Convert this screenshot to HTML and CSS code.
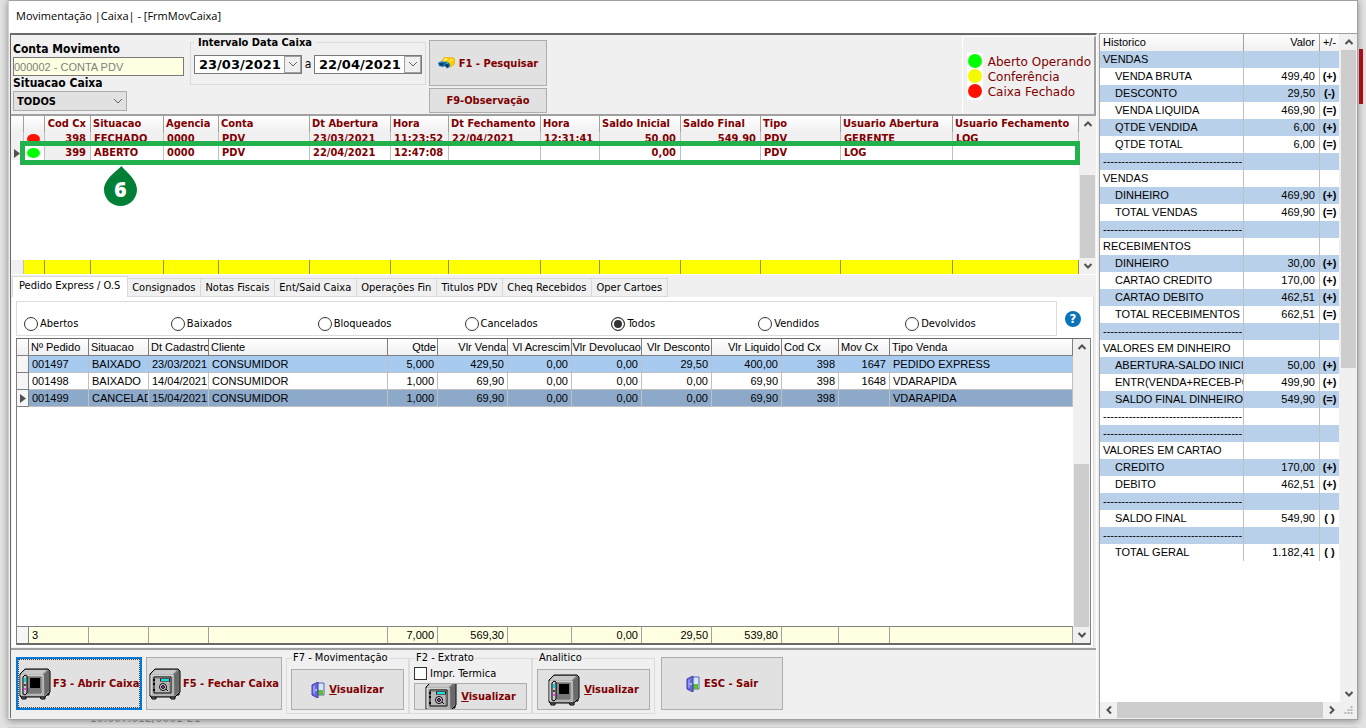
FILE: index.html
```html
<!DOCTYPE html>
<html lang="pt-br">
<head>
  <meta charset="UTF-8">
  <title>Movimentação |Caixa|</title>
  <link rel="stylesheet" href="styles.css">
</head>
<body>
  <svg class="defs" aria-hidden="true">
    <symbol id="seta-cima" viewBox="0 0 10 10"><path d="M1.5 7 5 3.5 8.5 7" fill="none" stroke="#505050" stroke-width="2"/></symbol>
    <symbol id="seta-baixo" viewBox="0 0 10 10"><path d="M1.5 3 5 6.5 8.5 3" fill="none" stroke="#505050" stroke-width="2"/></symbol>
    <symbol id="seta-esq" viewBox="0 0 10 10"><path d="M7 1.5 3.5 5 7 8.5" fill="none" stroke="#505050" stroke-width="2"/></symbol>
    <symbol id="seta-dir" viewBox="0 0 10 10"><path d="M3 1.5 6.5 5 3 8.5" fill="none" stroke="#505050" stroke-width="2"/></symbol>
    <symbol id="combo" viewBox="0 0 10 10"><path d="M1 3 5 7 9 3" fill="none" stroke="#606060" stroke-width="1"/></symbol>
    <symbol id="cofre-base" viewBox="0 0 32 32">
      <path d="M2 28h5v3H3zM21 28h5v3h-4zM27 24h3v3h-2z" fill="#808080" stroke="#000"/>
      <path d="M1 6 6 1h23l2 2v21l-5 5H2l-1-1z" fill="#808080" stroke="#000"/>
      <path d="M2 6 6 2h22l-4 4z" fill="#c8c8c8"/>
      <path d="M25 7l5-5v21l-4 4z" fill="#6a6a6a"/>
      <path d="M2 7h23v21H2z" fill="#b4b4b4"/>
      <path d="M2 27V7h22" fill="none" stroke="#eee"/>
    </symbol>
    <symbol id="cofre-aberto" viewBox="0 0 32 32">
      <use href="#cofre-base"/>
      <path d="M8 9h14v16H8z" fill="#888" stroke="#666"/>
      <path d="M11 10h10v10H11z" fill="#000"/>
      <path d="M9 20h12v4H9z" fill="#777"/>
      <path d="M4 9 6 7l2 1v17l-2 2-2-1z" fill="#c8c8c8" stroke="#000"/>
      <path d="M5 10h2v4H5z" fill="#00e0e0"/>
      <path d="M5 20h2v2H5z" fill="#ff40ff"/>
      <path d="M5 16h2v2H5z" fill="#444"/>
    </symbol>
    <symbol id="cofre-fechado" viewBox="0 0 32 32">
      <use href="#cofre-base"/>
      <path d="M5 9h17v16H5z" fill="#b8b8b8" stroke="#000"/>
      <path d="M6 10h15v14" fill="none" stroke="#777"/>
      <path d="M4 12h2M4 16h2M4 22h2" stroke="#000" stroke-width="2"/>
      <path d="M11 12h10" stroke="#000" stroke-width="3"/>
      <path d="M12 12h8" stroke="#00e8e8" stroke-width="2"/>
      <circle cx="14" cy="19" r="3.500" fill="#ddd" stroke="#000"/>
      <circle cx="14" cy="19" r="1.500" fill="#c040c0" stroke="#000"/>
      <path d="M17 21l2 2" stroke="#000" stroke-width="1"/>
    </symbol>
    <symbol id="porta" viewBox="0 0 14 16">
      <path d="M6 1h7v12H6z" fill="#cde9fa" stroke="#5b62b8"/>
      <path d="M7 8h5v5H7z" fill="#58c322"/>
      <path d="M1 3 7 0v16l-6-3z" fill="#6868dc" stroke="#3c3ca8"/>
      <path d="M2 4l2-1v9l-2-1z" fill="#9292f0"/>
      <path d="M5 7v2" stroke="#fff"/>
    </symbol>
    <symbol id="binoculo" viewBox="0 0 17 12">
      <path d="M4 3 7 0h3l2 1 3-.5L17 3l-.5 4-4 3-5-2z" fill="#fc0" stroke="#dc9800" stroke-width=".6"/>
      <path d="M5 3l3-2 2 1-2 2zM11 4l3-2 1 1-3 2z" fill="#fff07c"/>
      <path d="M0 6l3-2 3 1 3-.5 3 2.500-.5 3-2.500 1.500L7 9 5 10 1 9z" fill="#126ba5"/>
      <circle cx="3.500" cy="7" r="1.500" fill="#0a3560"/><circle cx="9" cy="8.500" r="1.600" fill="#0a3560"/>
      <path d="M2 5h2M8 6h2" stroke="#5cc6f4"/>
    </symbol>
  </svg>

  <div class="fundo">
    <div class="janela">
      <header class="titulo">Movimentação |Caixa| - [FrmMovCaixa]</header>

      <div class="corpo">
        <main class="principal">

          <section class="filtros">
            <div class="conta">
              <label for="conta">Conta Movimento</label>
              <input type="text" id="conta" value="000002 - CONTA PDV" disabled>
              <label for="situacao">Situacao Caixa</label>
              <div class="combo">
                <select id="situacao"><option>TODOS</option></select>
                <svg><use href="#combo"/></svg>
              </div>
            </div>
            <fieldset class="intervalo">
              <legend>Intervalo Data Caixa</legend>
              <div class="data">
                <input type="text" value="23/03/2021" aria-label="Data inicial">
                <button aria-label="Abrir calendário"><svg><use href="#combo"/></svg></button>
              </div>
              <span>a</span>
              <div class="data">
                <input type="text" value="22/04/2021" aria-label="Data final">
                <button aria-label="Abrir calendário"><svg><use href="#combo"/></svg></button>
              </div>
            </fieldset>
            <div class="acoes">
              <button class="botao pesquisar"><svg class="ico-bin"><use href="#binoculo"/></svg>F1 - Pesquisar</button>
              <button class="botao">F9-Observação</button>
            </div>
            <div class="legenda">
              <div class="bolas"><i class="verde"></i><i class="amarelo"></i><i class="vermelho"></i></div>
              <div class="textos"><span>Aberto Operando</span><span>Conferência</span><span>Caixa Fechado</span></div>
            </div>
          </section>

          <section class="caixas">
            <div class="area">
              <table class="tab-caixas">
                <colgroup>
                  <col class="w13"><col class="w21"><col class="w46"><col class="w73"><col class="w55"><col class="w91"><col class="w81"><col class="w58"><col class="w92"><col class="w59"><col class="w81"><col class="w80"><col class="w80"><col class="w112"><col>
                </colgroup>
                <thead>
                  <tr><th></th><th></th><th class="num">Cod Cx</th><th>Situacao</th><th>Agencia</th><th>Conta</th><th>Dt Abertura</th><th>Hora</th><th>Dt Fechamento</th><th>Hora</th><th>Saldo Inicial</th><th>Saldo Final</th><th>Tipo</th><th>Usuario Abertura</th><th>Usuario Fechamento</th></tr>
                </thead>
                <tbody>
                  <tr class="cinza"><td></td><td class="st"><i class="vermelho"></i></td><td class="num">398</td><td>FECHADO</td><td>0000</td><td>PDV</td><td>23/03/2021</td><td>11:23:52</td><td>22/04/2021</td><td>12:31:41</td><td class="num">50,00</td><td class="num">549,90</td><td>PDV</td><td>GERENTE</td><td>LOG</td></tr>
                  <tr><td class="marca"><svg viewBox="0 0 6 9"><path d="M0 0 6 4.500 0 9z"/></svg></td><td class="st"><i class="verde"></i></td><td class="num fixo">399</td><td>ABERTO</td><td>0000</td><td>PDV</td><td>22/04/2021</td><td>12:47:08</td><td></td><td></td><td class="num">0,00</td><td></td><td>PDV</td><td>LOG</td><td></td></tr>
                </tbody>
              </table>
              <table class="tab-caixas rodape">
                <colgroup>
                  <col class="w13"><col class="w21"><col class="w46"><col class="w73"><col class="w55"><col class="w91"><col class="w81"><col class="w58"><col class="w92"><col class="w59"><col class="w81"><col class="w80"><col class="w80"><col class="w112"><col>
                </colgroup>
                <tbody><tr><td></td><td></td><td></td><td></td><td></td><td></td><td></td><td></td><td></td><td></td><td></td><td></td><td></td><td></td><td></td></tr></tbody>
              </table>
              <div class="destaque"></div>
              <div class="gota">
                <svg viewBox="0 0 33 40"><path d="M17.500 0C20 4 33 13 33 23.500a16.500 16.500 0 0 1-33 0C0 13 14 4 17.500 0z" fill="#008037"/></svg>
                <span>6</span>
              </div>
            </div>
            <div class="rolagem">
              <button aria-label="Subir"><svg><use href="#seta-cima"/></svg></button>
              <div class="trilho"><div class="polegar fim p66"></div></div>
              <button aria-label="Descer"><svg><use href="#seta-baixo"/></svg></button>
            </div>
          </section>

          <section class="pedidos">
            <nav class="abas">
              <button class="ativa">Pedido Express / O.S</button>
              <button>Consignados</button>
              <button>Notas Fiscais</button>
              <button>Ent/Said Caixa</button>
              <button>Operações Fin</button>
              <button>Titulos PDV</button>
              <button>Cheq Recebidos</button>
              <button>Oper Cartoes</button>
            </nav>
            <div class="pagina">
              <div class="topo">
                <div class="opcoes">
                  <label><input type="radio" name="filtro">Abertos</label>
                  <label><input type="radio" name="filtro">Baixados</label>
                  <label><input type="radio" name="filtro">Bloqueados</label>
                  <label><input type="radio" name="filtro">Cancelados</label>
                  <label><input type="radio" name="filtro" checked>Todos</label>
                  <label><input type="radio" name="filtro">Vendidos</label>
                  <label><input type="radio" name="filtro">Devolvidos</label>
                </div>
                <button class="ajuda" aria-label="Ajuda">?</button>
              </div>
              <div class="grade">
                <div class="area">
                  <table class="tab-pedidos">
                    <colgroup>
                      <col class="w12"><col class="w60"><col class="w60"><col class="w60"><col class="w179"><col class="w50"><col class="w70"><col class="w64"><col class="w70"><col class="w70"><col class="w70"><col class="w57"><col class="w51"><col>
                    </colgroup>
                    <thead>
                      <tr><th></th><th>Nº Pedido</th><th>Situacao</th><th>Dt Cadastro</th><th>Cliente</th><th class="num">Qtde</th><th class="num">Vlr Venda</th><th class="num">Vl Acrescim</th><th class="num corta">Vlr Devolucao</th><th class="num">Vlr Desconto</th><th class="num">Vlr Liquido</th><th>Cod Cx</th><th>Mov Cx</th><th>Tipo Venda</th></tr>
                    </thead>
                    <tbody>
                      <tr class="azul"><td></td><td>001497</td><td>BAIXADO</td><td>23/03/2021</td><td>CONSUMIDOR</td><td class="num">5,000</td><td class="num">429,50</td><td class="num">0,00</td><td class="num">0,00</td><td class="num">29,50</td><td class="num">400,00</td><td class="num">398</td><td class="num">1647</td><td>PEDIDO EXPRESS</td></tr>
                      <tr><td></td><td>001498</td><td>BAIXADO</td><td>14/04/2021</td><td>CONSUMIDOR</td><td class="num">1,000</td><td class="num">69,90</td><td class="num">0,00</td><td class="num">0,00</td><td class="num">0,00</td><td class="num">69,90</td><td class="num">398</td><td class="num">1648</td><td>VDARAPIDA</td></tr>
                      <tr class="atual"><td class="marca"><svg viewBox="0 0 6 9"><path d="M0 0 6 4.500 0 9z"/></svg></td><td>001499</td><td>CANCELAD</td><td>15/04/2021</td><td>CONSUMIDOR</td><td class="num">1,000</td><td class="num">69,90</td><td class="num">0,00</td><td class="num">0,00</td><td class="num">0,00</td><td class="num">69,90</td><td class="num">398</td><td></td><td>VDARAPIDA</td></tr>
                    </tbody>
                  </table>
                  <table class="tab-pedidos totais">
                    <colgroup>
                      <col class="w12"><col class="w60"><col class="w60"><col class="w60"><col class="w179"><col class="w50"><col class="w70"><col class="w64"><col class="w70"><col class="w70"><col class="w70"><col class="w57"><col class="w51"><col>
                    </colgroup>
                    <tbody><tr><td></td><td>3</td><td></td><td></td><td></td><td class="num">7,000</td><td class="num">569,30</td><td></td><td class="num">0,00</td><td class="num">29,50</td><td class="num">539,80</td><td></td><td></td><td></td></tr></tbody>
                  </table>
                </div>
                <div class="rolagem">
                  <button aria-label="Subir"><svg><use href="#seta-cima"/></svg></button>
                  <div class="trilho"><div class="polegar fim p60"></div></div>
                  <button aria-label="Descer"><svg><use href="#seta-baixo"/></svg></button>
                </div>
              </div>
            </div>
          </section>

          <footer class="comandos">
            <button class="botao cofre foco"><svg class="ico-cofre"><use href="#cofre-aberto"/></svg>F3 - Abrir Caixa</button>
            <button class="botao cofre fechar"><svg class="ico-cofre"><use href="#cofre-fechado"/></svg>F5 - Fechar Caixa</button>
            <fieldset class="grupo">
              <legend>F7 - Movimentação</legend>
              <button class="botao"><svg class="ico-porta"><use href="#porta"/></svg><span><u>V</u>isualizar</span></button>
            </fieldset>
            <fieldset class="grupo">
              <legend>F2 - Extrato</legend>
              <label><input type="checkbox">Impr. Termica</label>
              <button class="botao"><svg class="ico-cofre"><use href="#cofre-fechado"/></svg><span><u>V</u>isualizar</span></button>
            </fieldset>
            <fieldset class="grupo">
              <legend>Analitico</legend>
              <button class="botao"><svg class="ico-cofre"><use href="#cofre-aberto"/></svg><span><u>V</u>isualizar</span></button>
            </fieldset>
            <button class="botao sair"><svg class="ico-porta"><use href="#porta"/></svg>ESC - Sair</button>
          </footer>
        </main>

        <aside class="lateral">
          <div class="linha">
            <div class="lista">
              <table class="historico">
                <colgroup><col><col class="w76"><col class="w20"></colgroup>
                <thead><tr><th>Historico</th><th class="num">Valor</th><th class="sinal">+/-</th></tr></thead>
                <tbody>
                  <tr><td>VENDAS</td><td></td><td></td></tr>
                  <tr><td class="sub">VENDA BRUTA</td><td>499,40</td><td>(+)</td></tr>
                  <tr><td class="sub">DESCONTO</td><td>29,50</td><td>(-)</td></tr>
                  <tr><td class="sub">VENDA LIQUIDA</td><td>469,90</td><td>(=)</td></tr>
                  <tr><td class="sub">QTDE VENDIDA</td><td>6,00</td><td>(+)</td></tr>
                  <tr><td class="sub">QTDE TOTAL</td><td>6,00</td><td>(=)</td></tr>
                  <tr><td>--------------------------------------</td><td></td><td></td></tr>
                  <tr><td>VENDAS</td><td></td><td></td></tr>
                  <tr><td class="sub">DINHEIRO</td><td>469,90</td><td>(+)</td></tr>
                  <tr><td class="sub">TOTAL VENDAS</td><td>469,90</td><td>(=)</td></tr>
                  <tr><td>--------------------------------------</td><td></td><td></td></tr>
                  <tr><td>RECEBIMENTOS</td><td></td><td></td></tr>
                  <tr><td class="sub">DINHEIRO</td><td>30,00</td><td>(+)</td></tr>
                  <tr><td class="sub">CARTAO CREDITO</td><td>170,00</td><td>(+)</td></tr>
                  <tr><td class="sub">CARTAO DEBITO</td><td>462,51</td><td>(+)</td></tr>
                  <tr><td class="sub">TOTAL RECEBIMENTOS</td><td>662,51</td><td>(=)</td></tr>
                  <tr><td>--------------------------------------</td><td></td><td></td></tr>
                  <tr><td>VALORES EM DINHEIRO</td><td></td><td></td></tr>
                  <tr><td class="sub">ABERTURA-SALDO INICIA</td><td>50,00</td><td>(+)</td></tr>
                  <tr><td class="sub">ENTR(VENDA+RECEB-PGT</td><td>499,90</td><td>(+)</td></tr>
                  <tr><td class="sub">SALDO FINAL DINHEIRO</td><td>549,90</td><td>(=)</td></tr>
                  <tr><td>--------------------------------------</td><td></td><td></td></tr>
                  <tr><td>--------------------------------------</td><td></td><td></td></tr>
                  <tr><td>VALORES EM CARTAO</td><td></td><td></td></tr>
                  <tr><td class="sub">CREDITO</td><td>170,00</td><td>(+)</td></tr>
                  <tr><td class="sub">DEBITO</td><td>462,51</td><td>(+)</td></tr>
                  <tr><td>--------------------------------------</td><td></td><td></td></tr>
                  <tr><td class="sub">SALDO FINAL</td><td>549,90</td><td>( )</td></tr>
                  <tr><td>--------------------------------------</td><td></td><td></td></tr>
                  <tr><td class="sub">TOTAL GERAL</td><td>1.182,41</td><td>( )</td></tr>
                </tbody>
              </table>
            </div>
            <div class="rolagem">
              <button aria-label="Subir"><svg><use href="#seta-cima"/></svg></button>
              <div class="trilho"><div class="polegar p50"></div></div>
              <button aria-label="Descer"><svg><use href="#seta-baixo"/></svg></button>
            </div>
          </div>
          <div class="rolagem-h">
            <button aria-label="Esquerda"><svg><use href="#seta-esq"/></svg></button>
            <div class="polegar"></div>
            <button aria-label="Direita"><svg><use href="#seta-dir"/></svg></button>
            <svg class="alca" viewBox="0 0 16 16"><path d="M10 4h2v2h-2zM7 7h2v2H7zM10 7h2v2h-2zM4 10h2v2H4zM7 10h2v2H7zM10 10h2v2h-2z" fill="#b8b8b8"/></svg>
          </div>
        </aside>
      </div>
    </div>
    <div class="tras"></div>
    <div class="atras-texto"><span>10.007.012/0001-21</span></div>
  </div>
</body>
</html>
```
FILE: styles.css
```css
* {
  box-sizing: border-box;
}

body {
  margin: 0;
  font-family: "DejaVu Sans Condensed", "DejaVu Sans", sans-serif;
  font-size: 11px;
  color: #000;
  overflow: hidden;
}

button, input, select {
  font: inherit;
  color: inherit;
  margin: 0;
  padding: 0;
  border-radius: 0;
}

svg {
  display: block;
}

i {
  display: block;
}

.defs {
  display: none;
}

/* fundo e janela */
.fundo {
  position: relative;
  display: flex;
  flex-direction: column;
  height: 100vh;
  padding: 0 8px;
  background: #e2e2e2;
}

.janela {
  flex: 1;
  min-height: 0;
  display: flex;
  flex-direction: column;
  background: #f0f0f0;
  border: 1px solid #a0a0a0;
  border-left-color: #d0d0d0;
  box-shadow: 0 1px 7px rgba(0,0,0,0.4);
  z-index: 1;
}

.titulo {
  height: 32px;
  flex: none;
  padding: 0 7px;
  line-height: 30px;
  background: #fff;
  font-family: "Open Sans", sans-serif;
  font-size: 11px;
}

.corpo {
  flex: 1;
  min-height: 0;
  display: flex;
  gap: 2px;
  padding: 0 0 1px 1px;
}

.principal {
  flex: 1;
  min-width: 0;
  display: flex;
  flex-direction: column;
  border-left: 1px solid #696969;
  border-top: 2px solid #696969;
  border-right: 1px solid #fff;
}

.atras-texto {
  height: 8px;
  flex: none;
  padding-left: 82px;
  border-bottom: 1px solid #d0d0d0;
  z-index: 2;
}

.atras-texto span {
  display: flex;
  align-items: flex-end;
  height: 3px;
  overflow: hidden;
  line-height: 10px;
  font-size: 12px;
  color: #777;
}

.tras {
  position: absolute;
  top: 49px;
  right: 3px;
  width: 4px;
  height: 55px;
  background: #a80f18;
  z-index: 2;
}

/* filtros */
.filtros {
  display: flex;
  height: 81px;
  flex: none;
  border-bottom: 2px solid #a0a0a0;
}

.conta {
  width: 173px;
  padding: 7px 0 0 2px;
  font-size: 12px;
  font-weight: bold;
}

.conta label {
  display: block;
  height: 15px;
  line-height: 15px;
}

.conta input {
  display: block;
  width: 100%;
  height: 19px;
  border: 1px solid #7a7a7a;
  background: #ffffe1;
  color: #808080;
  font-family: "Liberation Sans", sans-serif;
  font-size: 11px;
  font-weight: normal;
}

.combo {
  display: flex;
  align-items: center;
  width: 114px;
  height: 20px;
  padding: 0 3px;
  background: #e1e1e1;
  border: 1px solid #adadad;
  font-size: 11px;
}

.combo select {
  flex: 1;
  appearance: none;
  border: 0;
  background: none;
  font-weight: bold;
}

.combo svg, .data svg {
  width: 10px;
  height: 10px;
}

.intervalo {
  display: flex;
  align-items: center;
  justify-content: space-between;
  width: 236px;
  height: 50px;
  margin: 0 3px 0 6px;
  padding: 0 3px 6px;
  border: 1px solid #dcdcdc;
}

.intervalo legend {
  padding: 0 4px;
  line-height: 15px;
  font-weight: bold;
}

.intervalo span {
  font-size: 12px;
}

.data {
  display: flex;
  width: 108px;
  height: 19px;
  border: 1px solid #7a7a7a;
  background: #fff;
}

.data input {
  flex: 1;
  min-width: 0;
  padding-left: 4px;
  border: 0;
  background: none;
  font-family: "DejaVu Sans", sans-serif;
  font-size: 13px;
  font-weight: bold;
}

.data button {
  display: flex;
  align-items: center;
  justify-content: center;
  width: 17px;
  background: #f0f0f0;
  border: 1px solid #a0a0a0;
}

.botao {
  display: flex;
  align-items: center;
  justify-content: center;
  gap: 4px;
  background: #e1e1e1;
  border: 1px solid #adadad;
  color: #800000;
  font-weight: bold;
  white-space: nowrap;
}

.acoes {
  display: flex;
  flex-direction: column;
  gap: 2px;
  width: 118px;
  padding-top: 5px;
}

.acoes .botao {
  height: 25px;
}

.acoes .pesquisar {
  height: 46px;
}

.ico-bin {
  width: 17px;
  height: 12px;
}

.legenda {
  display: flex;
  gap: 5px;
  margin: 1px 0 0 auto;
  padding: 16px 3px 0 4px;
  border: 1px solid #fff;
  border-right: 2px solid #a0a0a0;
  border-bottom: 0;
  color: #800000;
  font-family: "DejaVu Sans", sans-serif;
  font-size: 12px;
}

.bolas {
  height: 47px;
  padding: 1px;
  background: #fff;
}

.bolas i {
  width: 14px;
  height: 14px;
  margin-bottom: 1px;
  border-radius: 50%;
}

.textos span {
  display: block;
  height: 15px;
  line-height: 19px;
}

.verde { background: #00ff00; }
.amarelo { background: #f4fa00; }
.vermelho { background: #ff1000; }

/* tabelas */
table {
  width: 100%;
  table-layout: fixed;
  border-collapse: separate;
  border-spacing: 0;
}

th, td {
  padding: 0 2px;
  overflow: hidden;
  white-space: nowrap;
  text-align: left;
  font-weight: inherit;
}

.num {
  text-align: right;
}

.w12 { width: 12px; }
.w13 { width: 13px; }
.w20 { width: 20px; }
.w21 { width: 21px; }
.w46 { width: 46px; }
.w50 { width: 50px; }
.w51 { width: 51px; }
.w55 { width: 55px; }
.w57 { width: 57px; }
.w58 { width: 58px; }
.w59 { width: 59px; }
.w60 { width: 60px; }
.w64 { width: 64px; }
.w70 { width: 70px; }
.w73 { width: 73px; }
.w76 { width: 76px; }
.w80 { width: 80px; }
.w81 { width: 81px; }
.w91 { width: 91px; }
.w92 { width: 92px; }
.w112 { width: 112px; }
.w179 { width: 179px; }

.area {
  position: relative;
  flex: 1;
  min-width: 0;
  display: flex;
  flex-direction: column;
  background: #fff;
}

.caixas {
  display: flex;
  flex: none;
  height: 159px;
  border-bottom: 1px solid #fff;
}

.tab-caixas {
  color: #800000;
  font-weight: bold;
}

.tab-caixas th, .tab-caixas td {
  height: 14px;
  line-height: 14px;
  border-right: 1px solid #c0c0c0;
}

.tab-caixas th {
  height: 16px;
  background: linear-gradient(#fff, #f0f0f0);
  border-right-color: #a0a0a0;
}

.tab-caixas td {
  padding: 0 3px;
}

.tab-caixas .num {
  padding-right: 4px;
}

.tab-caixas .cinza td, .tab-caixas .fixo, .tab-caixas td:first-child {
  background: #f0f0f0;
}

.st i {
  width: 13px;
  height: 10px;
  border-radius: 50%;
}

.marca svg {
  width: 6px;
  height: 9px;
  fill: #505050;
}

.rodape, .totais {
  margin-top: auto;
}

.tab-caixas.rodape td:not(:first-child) {
  background: #ffff00;
  border-right-color: #909060;
}

/* contorno verde sobre a linha aberta */
.destaque {
  position: absolute;
  top: 25px;
  left: 9px;
  right: -1px;
  height: 24px;
  border: 5px solid #22b14c;
}

.gota {
  position: absolute;
  top: 50px;
  left: 93px;
  width: 33px;
  height: 40px;
}

.gota span {
  position: absolute;
  left: 0;
  right: 0;
  bottom: 4px;
  text-align: center;
  line-height: 26px;
  color: #fff;
  font-family: "Open Sans", sans-serif;
  font-size: 21px;
  font-weight: 800;
}

.rolagem {
  display: flex;
  flex-direction: column;
  width: 17px;
  padding: 0 1px;
  background: #f0f0f0;
}

.rolagem button, .rolagem-h button {
  display: flex;
  align-items: center;
  justify-content: center;
  height: 16px;
  border: 0;
  background: none;
}

.rolagem button svg, .rolagem-h button svg {
  width: 10px;
  height: 10px;
}

.trilho {
  flex: 1;
  min-height: 0;
  display: flex;
  flex-direction: column;
}

.polegar {
  background: #cdcdcd;
}

.fim { margin-top: auto; }
.p50 { height: 50%; }
.p60 { height: 60%; }
.p66 { height: 66%; }

/* abas */
.pedidos {
  flex: 1;
  min-height: 0;
  display: flex;
  flex-direction: column;
  padding: 0 2px 1px 1px;
  border-bottom: 2px solid #a0a0a0;
}

.abas {
  display: flex;
  align-items: flex-end;
  height: 22px;
  flex: none;
}

.abas button {
  height: 19px;
  padding: 0 5px 0 4px;
  background: #f0f0f0;
  border: 1px solid #d9d9d9;
  border-left: 0;
}

.abas .ativa {
  height: 21px;
  padding: 0 7px 3px 6px;
  background: #fff;
  border-left: 1px solid #d9d9d9;
  border-bottom: 0;
}

.pagina {
  flex: 1;
  min-height: 0;
  display: flex;
  flex-direction: column;
  padding: 3px 2px 2px 4px;
  background: #fff;
  border-right: 1px solid #d9d9d9;
}

.topo {
  display: flex;
  justify-content: space-between;
  height: 38px;
  padding-right: 10px;
}

.opcoes {
  flex: 1;
  display: grid;
  grid-template-columns: repeat(7, 1fr);
  margin: 1px 8px 2px 0;
  padding: 10px 4px 0 7px;
  border: 1px solid #dcdcdc;
}

.opcoes label {
  display: flex;
  align-items: center;
  gap: 2px;
}

.opcoes input {
  width: 14px;
  height: 14px;
  appearance: none;
  border: 1px solid #333;
  border-radius: 50%;
  background: #fff;
}

.opcoes input:checked {
  background: #333;
  box-shadow: inset 0 0 0 2px #fff;
}

.ajuda {
  align-self: center;
  width: 16px;
  height: 16px;
  border: 0;
  border-radius: 50%;
  background: #0a74b9;
  color: #fff;
  font-size: 13px;
  line-height: 16px;
  font-weight: bold;
}

.grade {
  flex: 1;
  min-height: 0;
  display: flex;
  border: 1px solid #808080;
  border-top-color: #696969;
  border-bottom: 2px solid #696969;
}

.tab-pedidos {
  font-family: "Liberation Sans", sans-serif;
  font-size: 11px;
}

.tab-pedidos th, .tab-pedidos td {
  height: 17px;
  line-height: 16px;
  border-right: 1px solid #c0c0c0;
  border-bottom: 1px solid #c0c0c0;
}

.tab-pedidos th {
  padding-right: 1px;
  background: linear-gradient(#fff, #f0f0f0);
  border-color: #808080;
}

.tab-pedidos td {
  padding: 0 0 0 3px;
}

.tab-pedidos td.num {
  padding-right: 3px;
}

.tab-pedidos td:first-child {
  background: #f5f5f5;
  border-color: #808080;
}

.tab-pedidos .corta {
  direction: rtl;
}

.tab-pedidos .azul td:not(:first-child) {
  background: #a6caf0;
}

.tab-pedidos .atual td:not(:first-child) {
  background: #8ca9c9;
}

.totais td {
  height: 17px;
  background: #ffffe1;
  border-top: 1px solid #808080;
  border-right-color: #a0a0a0;
  border-bottom: 0;
}

/* comandos */
.comandos {
  display: flex;
  height: 68px;
  flex: none;
  gap: 4px;
  padding: 0 5px;
}

.comandos > .botao {
  height: 53px;
  margin-top: 7px;
}

.comandos .cofre {
  justify-content: flex-start;
  gap: 2px;
  width: 126px;
  padding-left: 2px;
  overflow: hidden;
}

.comandos .fechar {
  width: 136px;
}

.comandos .foco {
  padding-left: 1px;
  border: 2px solid #0078d7;
  outline: 1px dotted #404040;
  outline-offset: -3px;
}

.ico-cofre {
  width: 32px;
  height: 32px;
  flex: none;
}

.ico-porta {
  width: 14px;
  height: 16px;
}

.grupo {
  display: flex;
  flex-direction: column;
  width: 123px;
  height: 64px;
  margin: 0;
  margin-right: -4px;
  padding: 0 4px 3px;
  border: 1px solid #dcdcdc;
}

.grupo legend {
  margin-left: 1px;
  padding: 0 1px;
  line-height: 16px;
}

.grupo .botao {
  flex: 1;
  min-height: 0;
  margin-top: 3px;
}

.grupo label {
  display: flex;
  align-items: center;
  gap: 3px;
  height: 14px;
}

.grupo label + .botao {
  overflow: hidden;
}

.grupo input {
  width: 13px;
  height: 13px;
  appearance: none;
  border: 1px solid #333;
  background: #fff;
}

.sair {
  width: 122px;
  margin-left: 6px;
}

/* lateral */
.lateral {
  display: flex;
  flex-direction: column;
  width: 258px;
  border: 1px solid #a0a0a0;
  border-right: 0;
  border-bottom: 0;
  background: #fff;
}

.linha {
  flex: 1;
  min-height: 0;
  display: flex;
}

.lista {
  flex: 1;
  min-width: 0;
}

.historico {
  font-family: "Liberation Sans", sans-serif;
  font-size: 11px;
}

.historico th, .historico td {
  height: 17px;
  line-height: 17px;
  padding: 0 0 0 3px;
  border-right: 1px solid #c0c0c0;
}

.historico th {
  background: linear-gradient(#fff, #f0f0f0);
  border-right-color: #a0a0a0;
}

.historico .sub {
  padding-left: 15px;
}

.historico tbody tr:nth-child(odd) {
  background: #b9d0ea;
}

.historico td:nth-child(2), .historico .num {
  padding-right: 4px;
  text-align: right;
}

.historico td:last-child, .historico th:last-child {
  padding: 0;
  text-align: center;
  border-right-color: #f0f0f0;
}

.historico td:last-child {
  font-weight: bold;
}

.rolagem-h {
  display: flex;
  height: 16px;
  flex: none;
  background: #f0f0f0;
}

.rolagem-h button {
  width: 17px;
}

.rolagem-h .polegar {
  flex: 1;
}

.alca {
  width: 17px;
  height: 16px;
}
```
